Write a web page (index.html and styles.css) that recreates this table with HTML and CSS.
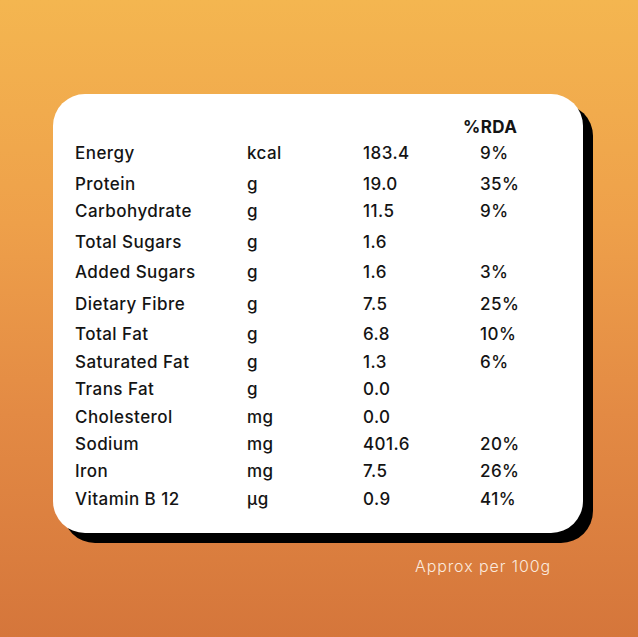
FILE: index.html
```html
<!DOCTYPE html>
<html lang="en">
<head>
<meta charset="utf-8">
<title>Nutrition</title>
<link rel="stylesheet" href="styles.css">
</head>
<body>
<div class="page">
  <div class="card">
    <div class="table">
      <div class="row"><span></span><span></span><span></span><span class="head">%RDA</span></div>
      <div class="row"><span>Energy</span><span>kcal</span><span>183.4</span><span>9%</span></div>
      <div class="row"><span>Protein</span><span>g</span><span>19.0</span><span>35%</span></div>
      <div class="row"><span>Carbohydrate</span><span>g</span><span>11.5</span><span>9%</span></div>
      <div class="row"><span>Total Sugars</span><span>g</span><span>1.6</span><span></span></div>
      <div class="row"><span>Added Sugars</span><span>g</span><span>1.6</span><span>3%</span></div>
      <div class="row"><span>Dietary Fibre</span><span>g</span><span>7.5</span><span>25%</span></div>
      <div class="row"><span>Total Fat</span><span>g</span><span>6.8</span><span>10%</span></div>
      <div class="row"><span>Saturated Fat</span><span>g</span><span>1.3</span><span>6%</span></div>
      <div class="row"><span>Trans Fat</span><span>g</span><span>0.0</span><span></span></div>
      <div class="row"><span>Cholesterol</span><span>mg</span><span>0.0</span><span></span></div>
      <div class="row"><span>Sodium</span><span>mg</span><span>401.6</span><span>20%</span></div>
      <div class="row"><span>Iron</span><span>mg</span><span>7.5</span><span>26%</span></div>
      <div class="row"><span>Vitamin B 12</span><span>µg</span><span>0.9</span><span>41%</span></div>
    </div>
  </div>
  <div class="note">Approx per 100g</div>
</div>
</body>
</html>
```
FILE: styles.css
```css
html, body {
  margin: 0;
  padding: 0;
}
body {
  width: 638px;
  height: 637px;
  overflow: hidden;
  font-family: Inter, "Liberation Sans", sans-serif;
}
.page {
  width: 638px;
  height: 637px;
  background: linear-gradient(180deg, #f4b650 0%, #eea04a 35%, #e38a44 65%, #d5763b 100%);
  overflow: hidden;
}
.card {
  margin: 94px 0 0 53px;
  width: 530px;
  height: 439px;
  box-sizing: border-box;
  padding: 20px 0 0 22px;
  background: #ffffff;
  border-radius: 32px;
  box-shadow: 10px 10px 0 #000000;
}
.table {
  display: grid;
  grid-template-columns: 172px 116px 117px auto;
  grid-template-rows: 26px 26px 31px 26.5px 31px 30.5px 31.5px 30.5px 27.5px 27px 28px 27px 27px 28px;
  color: #141414;
  font-size: 17px;
  font-weight: 500;
  letter-spacing: 0.45px;
}
.row {
  display: contents;
}
.row span {
  align-self: end;
  line-height: 26px;
  white-space: nowrap;
}
.head {
  font-weight: 700;
  margin-left: -17px;
}
.note {
  margin: 23px 0 0 415px;
  line-height: 20px;
  font-size: 16px;
  font-weight: 300;
  color: #fbeadf;
  letter-spacing: 0.9px;
}
```
